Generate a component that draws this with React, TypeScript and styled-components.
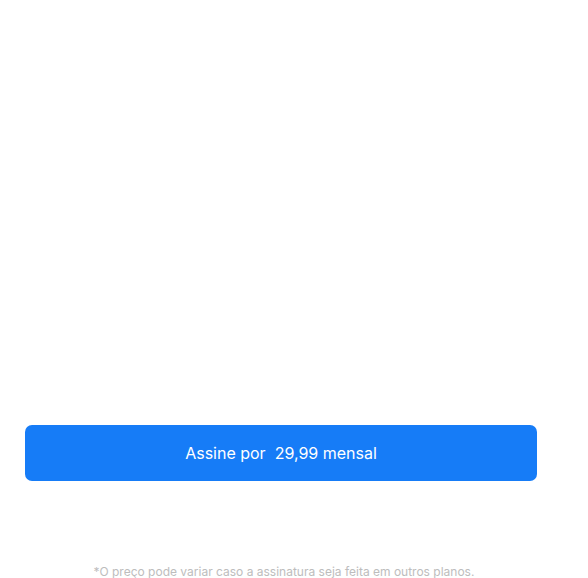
import React from "react";
import styled, { createGlobalStyle } from "styled-components";

const GlobalStyle = createGlobalStyle`
  html, body {
    margin: 0;
    padding: 0;
    background: #ffffff;
    font-family: Inter, "Noto Sans", sans-serif;
  }
`;

const Page = styled.div`
  width: 588px;
  height: 578px;
  display: flex;
  flex-direction: column;
  overflow: hidden;
`;

const Content = styled.div`
  height: 425px;
  flex-shrink: 0;
`;

const ButtonRow = styled.div`
  width: 562px;
  padding: 0 25px;
  box-sizing: border-box;
  display: flex;
`;

const SubscribeButton = styled.button`
  flex: 1;
  height: 56px;
  border: none;
  border-radius: 7px;
  background: #167cf7;
  color: #ffffff;
  font-family: Inter, "Noto Sans", sans-serif;
  font-size: 16px;
  font-weight: 400;
  white-space: pre;
  cursor: pointer;
  padding: 0;
`;

const Footnote = styled.p`
  width: 568px;
  margin: 83px 0 0;
  flex-shrink: 0;
  text-align: center;
  font-size: 12px;
  line-height: 16px;
  color: #bdbdbd;
`;

export default function App() {
  return (
    <Page>
      <GlobalStyle />
      <Content />
      <ButtonRow>
        <SubscribeButton>{"Assine por  29,99 mensal"}</SubscribeButton>
      </ButtonRow>
      <Footnote>*O preço pode variar caso a assinatura seja feita em outros planos.</Footnote>
    </Page>
  );
}
